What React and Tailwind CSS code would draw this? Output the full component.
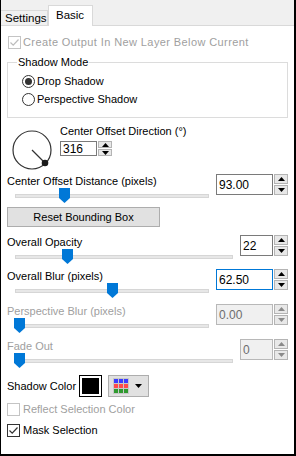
import React from 'react'

function Check({ checked, disabled }) {
    return (
        <span className={`w-[13px] h-[13px] border bg-white flex items-center justify-center ${disabled ? 'border-[#c4c4c4]' : 'border-[#333333]'}`}>
            {checked && (
                <svg width="11" height="11" viewBox="0 0 11 11">
                    <path d="M1.5 5.5 L4.2 8.2 L9.5 2.5" fill="none" stroke={disabled ? '#bcbcbc' : '#333333'} strokeWidth="1.2" />
                </svg>
            )}
        </span>
    )
}

function Radio({ checked }) {
    return (
        <span className="w-[13px] h-[13px] rounded-full border border-[#333333] bg-white flex items-center justify-center">
            {checked && <span className="w-[7px] h-[7px] rounded-full bg-[#333333]" />}
        </span>
    )
}

function Arrow({ up, disabled }) {
    return (
        <svg width="7" height="4" viewBox="0 0 7 4">
            <path d={up ? 'M0 4 L3.5 0 L7 4 Z' : 'M0 0 L3.5 4 L7 0 Z'} fill={disabled ? '#8a8a8a' : '#000000'} />
        </svg>
    )
}

function SpinBox({ value, boxW, h = 'h-[21px]', focused, disabled }) {
    const border = focused ? 'border-[#0078d7]' : disabled ? 'border-[#b8b8b8]' : 'border-[#7a7a7a]'
    return (
        <div className={`flex gap-px ${h}`}>
            <div className={`h-full ${boxW} border ${border} ${disabled ? 'bg-[#f0f0f0] text-[#6d6d6d]' : 'bg-white text-black'} flex items-center pl-[2px] text-[12px]`}>
                {value}
            </div>
            <div className="h-full w-[14px] flex flex-col gap-px">
                <div className="flex-1 border border-[#b4b4b4] bg-[#e8e8e8] flex items-center justify-center">
                    <Arrow up disabled={disabled} />
                </div>
                <div className="flex-1 border border-[#b4b4b4] bg-[#e8e8e8] flex items-center justify-center">
                    <Arrow disabled={disabled} />
                </div>
            </div>
        </div>
    )
}

function SliderRow({ label, value, trackW, boxW, thumb, disabled, focused, className = '' }) {
    return (
        <div className={`flex pl-[6px] pr-[6px] ${className}`}>
            <div className="flex-1 flex flex-col">
                <div className={`h-[14px] leading-[14px] ${disabled ? 'text-[#a0a0a0]' : 'text-black'}`}>{label}</div>
                <div className={`relative h-[16px] ml-[8px] ${trackW}`}>
                    <div className="absolute left-0 right-0 top-[6px] h-[4px] bg-[#e7e7e7] border border-[#d6d6d6]" />
                    <svg className="absolute top-0" style={{ left: thumb }} width="11" height="15" viewBox="0 0 11 15">
                        <path d="M0 0 H11 V10 L5.5 15 L0 10 Z" fill="#0078d7" />
                    </svg>
                </div>
            </div>
            <SpinBox value={value} boxW={boxW} focused={focused} disabled={disabled} />
        </div>
    )
}

export default function App() {
    return (
        <div className="w-[296px] h-[456px] bg-white border-l border-r-2 border-b-2 border-black flex flex-col font-['Liberation_Sans',Arial,sans-serif] text-[11px] text-black">
            {/* Tabs */}
            <div className="h-[26px] bg-[#f0f0f0] border-b border-[#d9d9d9] flex items-end">
                <div className="h-[15px] w-[47px] pl-[4px] border-t border-r border-[#d9d9d9] bg-[#f0f0f0] leading-[14px] text-[11.5px]">Settings</div>
                <div className="relative h-[21px] w-[45px] -mb-px bg-white border-t border-l border-r border-[#d9d9d9] pl-[7px] pt-[2px] leading-[14px] text-[11.5px]">Basic</div>
            </div>

            {/* Panel */}
            <div className="flex-1 flex flex-col">
                <div className="mt-[10px] ml-[7px] flex items-center gap-[2px] h-[13px] text-[#a0a0a0] tracking-[0.4px]">
                    <Check checked disabled />
                    <span>Create Output In New Layer Below Current</span>
                </div>

                {/* Shadow Mode group */}
                <div className="relative mt-[13px] ml-[6px] mr-[6px] h-[56px] border border-[#dcdcdc] flex flex-col">
                    <span className="absolute -top-[8px] left-[9px] px-[1px] bg-white leading-[14px]">Shadow Mode</span>
                    <div className="mt-[12px] ml-[14px] flex items-center gap-[2px] h-[13px]">
                        <Radio checked />
                        <span>Drop Shadow</span>
                    </div>
                    <div className="mt-[5px] ml-[14px] flex items-center gap-[2px] h-[13px]">
                        <Radio />
                        <span>Perspective Shadow</span>
                    </div>
                </div>

                {/* Direction dial */}
                <div className="mt-[6px] h-[50px] flex">
                    <svg className="ml-[9px]" width="46" height="50" viewBox="0 0 46 50">
                        <circle cx="22" cy="26" r="19" fill="none" stroke="#333333" strokeWidth="1.2" />
                        <line x1="22" y1="26" x2="35" y2="39" stroke="#333333" strokeWidth="1.2" />
                        <circle cx="35" cy="39" r="3.3" fill="#1a1a1a" />
                    </svg>
                    <div className="ml-[4px] flex flex-col">
                        <div className="h-[14px] leading-[14px]">Center Offset Direction (°)</div>
                        <div className="mt-[3px]">
                            <SpinBox value="316" boxW="w-[37px]" h="h-[15px]" />
                        </div>
                    </div>
                </div>

                <SliderRow label="Center Offset Distance (pixels)" value="93.00" trackW="w-[194px]" boxW="w-[57px]" thumb={44} />

                <div className="mt-[3px] ml-[6px] w-[153px] h-[20px] bg-[#e1e1e1] border border-[#adadad] flex items-center justify-center">
                    Reset Bounding Box
                </div>

                <SliderRow className="mt-[8px]" label="Overall Opacity" value="22" trackW="w-[218px]" boxW="w-[33px]" thumb={47} />
                <SliderRow className="mt-[4px]" label="Overall Blur (pixels)" value="62.50" trackW="w-[194px]" boxW="w-[57px]" thumb={92} focused />
                <SliderRow className="mt-[5px]" label="Perspective Blur (pixels)" value="0.00" trackW="w-[194px]" boxW="w-[57px]" thumb={-1} disabled />
                <SliderRow className="mt-[5px]" label="Fade Out" value="0" trackW="w-[218px]" boxW="w-[33px]" thumb={-1} disabled />

                {/* Shadow color */}
                <div className="mt-[6px] ml-[6px] h-[22px] flex items-center">
                    <span className="w-[72px] whitespace-nowrap">Shadow Color</span>
                    <div className="w-[23px] h-[22px] border border-black bg-white p-[2px]">
                        <div className="w-full h-full bg-black" />
                    </div>
                    <div className="ml-[6px] w-[41px] h-[22px] bg-[#e1e1e1] border border-[#adadad] flex items-center pl-[4px] gap-[6px]">
                        <svg width="16" height="16" viewBox="0 0 16 16">
                            <rect x="0" y="0" width="16" height="16" fill="#c8c8c8" />
                            <rect x="1" y="1" width="4" height="4" fill="#3b3bff" />
                            <rect x="6" y="1" width="4" height="4" fill="#3b3bff" />
                            <rect x="11" y="1" width="4" height="4" fill="#3b3bff" />
                            <rect x="1" y="6" width="4" height="4" fill="#ff4a4a" />
                            <rect x="6" y="6" width="4" height="4" fill="#ff4a4a" />
                            <rect x="11" y="6" width="4" height="4" fill="#ff4a4a" />
                            <rect x="1" y="11" width="4" height="4" fill="#2f9a2f" />
                            <rect x="6" y="11" width="4" height="4" fill="#2f9a2f" />
                            <rect x="11" y="11" width="4" height="4" fill="#2f9a2f" />
                        </svg>
                        <svg width="7" height="4" viewBox="0 0 7 4">
                            <path d="M0 0 L3.5 4 L7 0 Z" fill="#000000" />
                        </svg>
                    </div>
                </div>

                <div className="mt-[6px] ml-[6px] flex items-center gap-[3px] h-[13px] text-[#a0a0a0]">
                    <Check disabled />
                    <span>Reflect Selection Color</span>
                </div>
                <div className="mt-[8px] ml-[6px] flex items-center gap-[3px] h-[13px]">
                    <Check checked />
                    <span>Mask Selection</span>
                </div>
            </div>
        </div>
    )
}
